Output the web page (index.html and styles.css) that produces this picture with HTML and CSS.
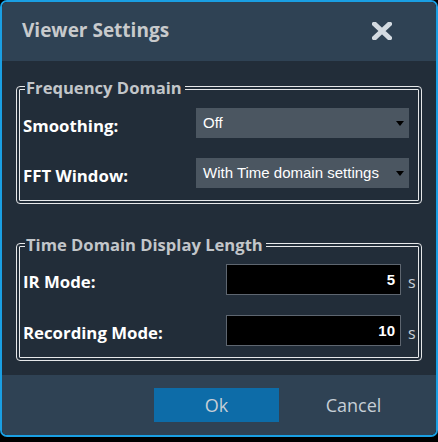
FILE: index.html
```html
<!DOCTYPE html>
<html>
<head>
<meta charset="utf-8">
<link rel="stylesheet" href="styles.css">
</head>
<body>
<div class="window">
  <div class="header">
    <span class="title">Viewer Settings</span>
    <svg class="close" width="20" height="18" viewBox="0 0 20 18">
      <path d="M2.5 2 L17.5 16 M17.5 2 L2.5 16" stroke="#d3dae1" stroke-width="5" stroke-linecap="square"/>
    </svg>
  </div>
  <div class="content">
    <fieldset class="group">
      <legend>Frequency Domain</legend>
      <div class="row">
        <span class="label">Smoothing:</span>
        <div class="select"><span>Off</span><span class="arrow"></span></div>
      </div>
      <div class="row">
        <span class="label">FFT Window:</span>
        <div class="select"><span>With Time domain settings</span><span class="arrow"></span></div>
      </div>
    </fieldset>
    <fieldset class="group group2">
      <legend>Time Domain Display Length</legend>
      <div class="row numrow">
        <span class="label">IR Mode:</span>
        <div class="num">5</div>
        <span class="unit">s</span>
      </div>
      <div class="row numrow">
        <span class="label">Recording Mode:</span>
        <div class="num">10</div>
        <span class="unit">s</span>
      </div>
    </fieldset>
  </div>
  <div class="footer">
    <div class="btn ok">Ok</div>
    <div class="btn cancel">Cancel</div>
  </div>
</div>
</body>
</html>
```

FILE: styles.css
```css
html, body {
  margin: 0;
  padding: 0;
  background: #000;
}
.window {
  width: 438px;
  height: 437px;
  box-sizing: border-box;
  border: 2px solid #1a9fe3;
  border-radius: 7px;
  overflow: hidden;
  display: flex;
  flex-direction: column;
  font-family: "Open Sans", "Noto Sans", sans-serif;
}
.header {
  height: 59px;
  flex: none;
  background: #2f4254;
  display: flex;
  align-items: center;
  justify-content: space-between;
  padding: 0 44px 0 20px;
}
.title {
  color: #c8cacc;
  font-weight: 700;
  font-size: 19px;
  margin-top: -4px;
}
.close {
  margin-top: -2px;
}
.content {
  flex: 1;
  background: #222d39;
  padding: 17px 14px 0 14px;
}
.group {
  margin: 0;
  border: 4px double #e6e8ea;
  border-radius: 4px;
  padding: 10px 9px 12px 3px;
}
.group legend {
  color: #c2c6ca;
  font-weight: 700;
  font-size: 16.6px;
  line-height: 20px;
  padding: 0 3px 0 1px;
  margin-left: 2px;
}
.group2 {
  margin-top: 31px;
  padding-top: 9px;
  padding-bottom: 11px;
}
.row {
  display: flex;
  align-items: center;
  justify-content: space-between;
}
.numrow {
  display: grid;
  grid-template-columns: 1fr 175px 17px;
  align-items: center;
  margin-right: -9px;
}
.row + .row {
  margin-top: 20px;
}
.label {
  color: #fff;
  font-weight: 700;
  font-size: 16.8px;
  margin-top: 4px;
}
.select {
  width: 213px;
  height: 30px;
  box-sizing: border-box;
  background: #4b5661;
  display: flex;
  align-items: center;
  justify-content: space-between;
  padding: 0 5px 1px 7px;
  color: #fff;
  font-family: "Liberation Sans", Arial, sans-serif;
  font-size: 15px;
}
.arrow {
  width: 0;
  height: 0;
  border-left: 4px solid transparent;
  border-right: 4px solid transparent;
  border-top: 5px solid #000;
  margin-top: 2px;
}
.num {
  height: 31px;
  box-sizing: border-box;
  background: #000;
  border: 1px solid #5e6670;
  color: #fff;
  font-family: "Liberation Sans", Arial, sans-serif;
  font-weight: 700;
  font-size: 15px;
  text-align: right;
  padding-right: 5px;
  line-height: 29px;
}
.unit {
  color: #c8d0d8;
  font-size: 16px;
  padding-left: 7px;
  margin-top: 4px;
}
.footer {
  height: 60px;
  flex: none;
  box-sizing: border-box;
  background: #2f4254;
  display: flex;
  justify-content: flex-end;
  align-items: flex-start;
  padding: 13px 20px 0 0;
  gap: 12px;
}
.btn {
  width: 125px;
  height: 34px;
  display: flex;
  align-items: center;
  justify-content: center;
  color: #c6ced6;
  font-size: 18px;
}
.ok {
  background: #0d6ca8;
}
```
